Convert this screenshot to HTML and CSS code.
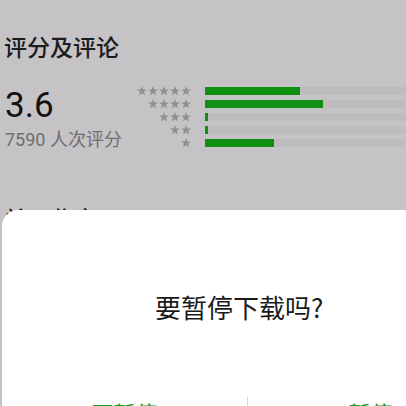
FILE: index.html
```html
<!DOCTYPE html>
<html lang="zh">
<head>
<meta charset="utf-8">
<link rel="stylesheet" href="styles.css">
</head>
<body>
<div class="page">
  <h2 class="title">评分及评论</h2>
  <div class="rating">
    <div class="summary">
      <div class="score">3.6</div>
      <div class="count">7590 人次评分</div>
    </div>
    <div class="dist">
      <div class="row"><div class="stars"><i></i><i></i><i></i><i></i><i></i></div><div class="track"><div class="bar" style="width:95px"></div></div></div>
      <div class="row"><div class="stars"><i></i><i></i><i></i><i></i></div><div class="track"><div class="bar" style="width:118px"></div></div></div>
      <div class="row"><div class="stars"><i></i><i></i><i></i></div><div class="track"><div class="bar" style="width:3px"></div></div></div>
      <div class="row"><div class="stars"><i></i><i></i></div><div class="track"><div class="bar" style="width:3px"></div></div></div>
      <div class="row"><div class="stars"><i></i></div><div class="track"><div class="bar" style="width:69px"></div></div></div>
    </div>
  </div>
  <h2 class="title next">关于此应用</h2>
</div>
<div class="dialog">
  <div class="message">要暂停下载吗?</div>
  <div class="actions">
    <div class="btn left">不暂停</div>
    <div class="divider"></div>
    <div class="btn right">暂停</div>
  </div>
</div>
</body>
</html>
```
FILE: styles.css
```css
html, body {
  margin: 0;
  padding: 0;
}
body {
  width: 406px;
  height: 406px;
  overflow: hidden;
  background: #c5c3c6;
  position: relative;
  font-family: Roboto, "Noto Sans CJK SC", sans-serif;
}
.page {
  padding: 31px 0 0 4px;
}
.title {
  margin: 0;
  font-family: "Noto Sans CJK SC", sans-serif;
  font-size: 23px;
  font-weight: 500;
  line-height: 30px;
  color: #1d1c1d;
}
.rating {
  display: flex;
  margin-top: 24px;
}
.summary {
  width: 132px;
  padding-left: 1px;
}
.score {
  font-size: 35px;
  line-height: 40px;
  color: #111;
  font-family: Roboto, sans-serif;
  margin-top: 1px;
}
.count {
  font-size: 18px;
  line-height: 24px;
  color: #6f6e70;
  margin-top: 2px;
}
.dist {
  flex: 1;
  display: flex;
  flex-direction: column;
  gap: 5px;
  padding-top: 2px;
}
.row {
  display: flex;
  align-items: center;
  height: 8px;
}
.stars {
  width: 54px;
  display: flex;
  justify-content: flex-end;
  gap: 1px;
}
.stars i {
  width: 10px;
  height: 10px;
  background: #918f92;
  clip-path: polygon(50% 0%, 63% 36%, 100% 36%, 70% 58%, 81% 95%, 50% 73%, 19% 95%, 30% 58%, 0% 36%, 37% 36%);
}
.track {
  margin-left: 14px;
  flex: 1;
  height: 8px;
  background: #bebcbf;
}
.bar {
  height: 8px;
  background: #109010;
}
.next {
  margin-top: 51px;
}
.dialog {
  position: absolute;
  left: 2px;
  top: 210px;
  width: 500px;
  height: 260px;
  background: #fff;
  border-top-left-radius: 16px;
}
.message {
  font-family: "Noto Sans CJK SC", sans-serif;
  font-size: 26px;
  line-height: 34px;
  color: #1a1a1a;
  padding-top: 80px;
  padding-left: 153px;
}
.actions {
  display: flex;
  margin-top: 73px;
  height: 50px;
}
.btn {
  width: 245px;
  text-align: center;
  font-family: "Noto Sans CJK SC", sans-serif;
  font-size: 22px;
  line-height: 30px;
  color: #1c9a1c;
}
.divider {
  width: 1px;
  height: 30px;
  background: #d8d8d8;
}
```
